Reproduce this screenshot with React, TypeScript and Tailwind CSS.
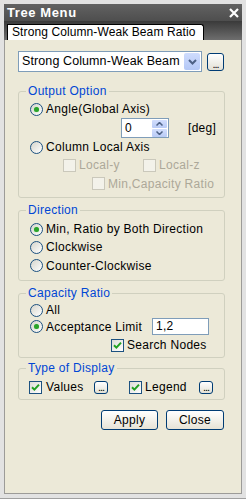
import type { ReactNode } from "react";

const Radio = ({ checked }: { checked?: boolean }) => (
  <span className="w-[13px] h-[13px] shrink-0 rounded-full border border-[#1c5180] bg-linear-to-br from-[#d6d5cc] to-white flex items-center justify-center">
    {checked && <span className="w-[5px] h-[5px] rounded-full bg-[#2aa32a] shadow-[0_0_1px_#7fd77f]" />}
  </span>
);

const Check = ({ checked, disabled }: { checked?: boolean; disabled?: boolean }) => (
  <span
    className={
      disabled
        ? "w-[13px] h-[13px] shrink-0 border border-[#cac8bb] bg-[#f3f2ea]"
        : "w-[13px] h-[13px] shrink-0 border border-[#1c5180] bg-linear-to-br from-[#dcdcd7] to-white flex items-center justify-center"
    }
  >
    {checked && (
      <svg width="9" height="9" viewBox="0 0 9 9">
        <path d="M1 4.2 L3.4 6.6 L8 1.6" stroke="#21a121" strokeWidth="2" fill="none" />
      </svg>
    )}
  </span>
);

const Dots = ({ big }: { big?: boolean }) => (
  <button
    className={
      (big ? "w-[17px] h-[18px] " : "w-[14px] h-[13px] ") +
      "shrink-0 rounded-[3px] border border-[#003c74] bg-linear-to-b from-white to-[#e3e1d6] flex items-end justify-center pb-[1px] text-[11px] leading-[10px] tracking-[-1px]"
    }
  >
    ...
  </button>
);

const Group = ({ title, className, children }: { title: string; className: string; children: ReactNode }) => (
  <div className={"relative w-[207px] rounded-[3px] border border-[#d0d0bf] " + className}>
    <span className="absolute -top-[9px] left-[7px] h-[16px] px-[2px] bg-[#ece9d8] text-[#0046d5] leading-[16px]">
      {title}
    </span>
    {children}
  </div>
);

export default function App() {
  return (
    <div className="w-[246px] h-[499px] bg-[#e2e2e2] border-b border-[#a0a0a0] flex flex-col px-[4px] pt-[4px] pb-[4px] font-['Liberation_Sans',Arial,sans-serif] text-[12px] tracking-[0.3px] text-black whitespace-nowrap">
      {/* title bar */}
      <div className="h-[17px] shrink-0 bg-linear-to-b from-[#626262] to-[#4e4e4e] flex items-center justify-between pl-[3px] pr-[3px]">
        <span className="text-white font-bold text-[13px] tracking-[0.6px] leading-[17px]">Tree Menu</span>
        <svg width="10" height="10" viewBox="0 0 10 10">
          <path d="M1 1 L9 9 M9 1 L1 9" stroke="white" strokeWidth="2.2" />
        </svg>
      </div>

      {/* tab strip */}
      <div className="h-[19px] shrink-0 bg-linear-to-b from-[#3a3a3a] to-[#6e6e6e] flex items-end pl-[3px]">
        <div className="w-[197px] h-[16px] bg-white border border-b-0 border-black rounded-tr-[3px] pl-[4px] leading-[15px] tracking-[0.1px]">
          Strong Column-Weak Beam Ratio
        </div>
      </div>

      {/* panel */}
      <div className="flex-1 bg-[#ece9d8] border border-t-0 border-[#9c9b98] flex flex-col pl-[13px] pt-[11px]">
        <div className="flex items-center gap-[5px]">
          <div className="w-[184px] h-[21px] border border-[#7f9db9] bg-white flex items-center justify-between pl-[3px] pr-[1px]">
            <span className="text-[12.5px] tracking-[0.1px]">Strong Column-Weak Beam</span>
            <span className="w-[16px] h-[17px] shrink-0 rounded-[2px] bg-linear-to-b from-[#cfdcfd] to-[#b4c8f6] flex items-center justify-center">
              <svg width="9" height="6" viewBox="0 0 9 6">
                <path d="M1 1 L4.5 4.5 L8 1" stroke="#4d6185" strokeWidth="2" fill="none" />
              </svg>
            </span>
          </div>
          <Dots big />
        </div>

        <Group title="Output Option" className="mt-[19px] pt-[8px] pb-[4px]">
          <div className="h-[18px] flex items-center gap-[3px] pl-[11px]">
            <Radio checked />
            <span>Angle(Global Axis)</span>
          </div>
          <div className="h-[20px] flex items-center pl-[102px]">
            <div className="w-[48px] h-[20px] border border-[#7f9db9] bg-white flex items-center justify-between pl-[3px] pr-[1px]">
              <span>0</span>
              <span className="w-[15px] h-[17px] flex flex-col gap-[1px]">
                <span className="flex-1 rounded-[1px] bg-linear-to-b from-[#d2defd] to-[#b9cbf6] flex items-center justify-center">
                  <svg width="7" height="4" viewBox="0 0 7 4">
                    <path d="M0.5 3.5 L3.5 0.5 L6.5 3.5" stroke="#4d6185" strokeWidth="1.5" fill="none" />
                  </svg>
                </span>
                <span className="flex-1 rounded-[1px] bg-linear-to-b from-[#d2defd] to-[#b9cbf6] flex items-center justify-center">
                  <svg width="7" height="4" viewBox="0 0 7 4">
                    <path d="M0.5 0.5 L3.5 3.5 L6.5 0.5" stroke="#4d6185" strokeWidth="1.5" fill="none" />
                  </svg>
                </span>
              </span>
            </div>
            <span className="ml-[19px]">[deg]</span>
          </div>
          <div className="h-[18px] flex items-center gap-[3px] pl-[11px]">
            <Radio />
            <span>Column Local Axis</span>
          </div>
          <div className="h-[18px] flex items-center pl-[44px] text-[#aca899]">
            <div className="w-[80px] flex items-center gap-[3px]">
              <Check disabled />
              <span>Local-y</span>
            </div>
            <div className="flex items-center gap-[3px]">
              <Check disabled />
              <span>Local-z</span>
            </div>
          </div>
          <div className="h-[19px] flex items-center gap-[3px] pl-[73px] text-[#aca899]">
            <Check disabled />
            <span>Min,Capacity Ratio</span>
          </div>
        </Group>

        <Group title="Direction" className="mt-[12px] pt-[9px] pb-[5px]">
          <div className="h-[18px] flex items-center gap-[3px] pl-[11px]">
            <Radio checked />
            <span>Min, Ratio by Both Direction</span>
          </div>
          <div className="h-[18px] flex items-center gap-[3px] pl-[11px]">
            <Radio />
            <span>Clockwise</span>
          </div>
          <div className="h-[19px] flex items-center gap-[3px] pl-[11px]">
            <Radio />
            <span>Counter-Clockwise</span>
          </div>
        </Group>

        <Group title="Capacity Ratio" className="mt-[12px] pt-[8px] pb-[3px]">
          <div className="h-[16px] flex items-center gap-[3px] pl-[11px]">
            <Radio />
            <span>All</span>
          </div>
          <div className="h-[17px] flex items-center pl-[11px]">
            <Radio checked />
            <span className="ml-[3px] w-[106px]">Acceptance Limit</span>
            <div className="w-[57px] h-[17px] border border-[#7f9db9] bg-white pl-[3px] leading-[15px]">1,2</div>
          </div>
          <div className="h-[18px] mt-[1px] flex items-center gap-[3px] pl-[92px]">
            <Check checked />
            <span>Search Nodes</span>
          </div>
        </Group>

        <Group title="Type of Display" className="mt-[10px] pt-[9px] pb-[3px]">
          <div className="h-[18px] flex items-center pl-[10px]">
            <Check checked />
            <span className="ml-[4px] w-[48px]">Values</span>
            <Dots />
            <span className="ml-[21px]">
              <Check checked />
            </span>
            <span className="ml-[3px] w-[54px]">Legend</span>
            <Dots />
          </div>
        </Group>

        <div className="w-[207px] mt-[10px] flex justify-end gap-[8px] pr-[1px]">
          <button className="w-[57px] h-[20px] rounded-[3px] border border-[#003c74] bg-linear-to-b from-white to-[#e6e3d6] leading-[18px]">
            Apply
          </button>
          <button className="w-[58px] h-[20px] rounded-[3px] border border-[#003c74] bg-linear-to-b from-white to-[#e6e3d6] leading-[18px]">
            Close
          </button>
        </div>
      </div>
    </div>
  );
}
